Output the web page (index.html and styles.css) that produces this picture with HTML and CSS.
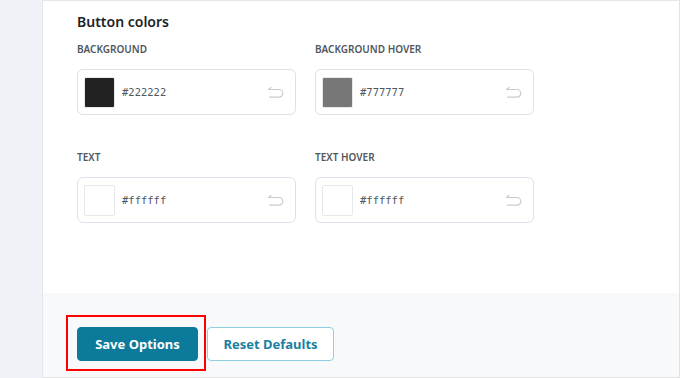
FILE: index.html
```html
<!DOCTYPE html>
<html lang="en">
<head>
    <meta charset="UTF-8">
    <meta name="viewport" content="width=device-width, initial-scale=1.0">
    <title>Button colors</title>
    <link rel="stylesheet" href="styles.css">
</head>
<body>
    <div class="sidebar"></div>
    <div class="main">
        <div class="content">
            <h3>Button colors</h3>
            <div class="color-grid">
                <div class="field">
                    <label>Background</label>
                    <div class="picker">
                        <span class="swatch" style="background: #222222;"></span>
                        <span class="value">#222222</span>
                        <svg class="undo" width="18" height="12" viewBox="0 0 18 12"><path d="M5 1.5 L2.5 3.5 M2.5 3.5 H13 a3.8 3.8 0 0 1 0 7.6 H3.5" fill="none" stroke="#c8cbd0" stroke-width="1.2" stroke-linecap="round"/></svg>
                    </div>
                </div>
                <div class="field">
                    <label>Background Hover</label>
                    <div class="picker">
                        <span class="swatch" style="background: #777777;"></span>
                        <span class="value">#777777</span>
                        <svg class="undo" width="18" height="12" viewBox="0 0 18 12"><path d="M5 1.5 L2.5 3.5 M2.5 3.5 H13 a3.8 3.8 0 0 1 0 7.6 H3.5" fill="none" stroke="#c8cbd0" stroke-width="1.2" stroke-linecap="round"/></svg>
                    </div>
                </div>
                <div class="field">
                    <label>Text</label>
                    <div class="picker">
                        <span class="swatch" style="background: #ffffff;"></span>
                        <span class="value">#ffffff</span>
                        <svg class="undo" width="18" height="12" viewBox="0 0 18 12"><path d="M5 1.5 L2.5 3.5 M2.5 3.5 H13 a3.8 3.8 0 0 1 0 7.6 H3.5" fill="none" stroke="#c8cbd0" stroke-width="1.2" stroke-linecap="round"/></svg>
                    </div>
                </div>
                <div class="field">
                    <label>Text Hover</label>
                    <div class="picker">
                        <span class="swatch" style="background: #ffffff;"></span>
                        <span class="value">#ffffff</span>
                        <svg class="undo" width="18" height="12" viewBox="0 0 18 12"><path d="M5 1.5 L2.5 3.5 M2.5 3.5 H13 a3.8 3.8 0 0 1 0 7.6 H3.5" fill="none" stroke="#c8cbd0" stroke-width="1.2" stroke-linecap="round"/></svg>
                    </div>
                </div>
            </div>
        </div>
        <div class="footer">
            <div class="highlight">
                <button class="btn btn-primary">Save Options</button>
            </div>
            <button class="btn btn-secondary">Reset Defaults</button>
        </div>
    </div>
</body>
</html>
```

FILE: styles.css
```css
body {
    margin: 0;
    display: flex;
    height: 378px;
    font-family: "Noto Sans", "Open Sans", sans-serif;
    color: #1d2327;
    background: #fff;
    overflow: hidden;
}
.sidebar {
    width: 42px;
    background-color: #f0f2f7;
    border-right: 1px solid #e3e6ec;
}
.main {
    flex: 1;
    display: flex;
    flex-direction: column;
    border-top: 1px solid #e6e6e6;
    border-right: 1px solid #e2e2e2;
    border-bottom: 1px solid #e2e2e2;
}
.content {
    flex: 1;
    padding: 11px 34px 0 34px;
}
h3 {
    margin: 0;
    font-size: 14px;
    font-weight: 600;
    line-height: 20px;
    color: #1d2327;
}
.color-grid {
    display: grid;
    grid-template-columns: 219px 219px;
    column-gap: 19px;
    row-gap: 35px;
    margin-top: 10px;
}
.field label {
    display: block;
    font-size: 10px;
    font-weight: 600;
    text-transform: uppercase;
    color: #50575e;
    line-height: 14px;
    margin-bottom: 13px;
}
.picker {
    display: flex;
    align-items: center;
    border: 1px solid #dde1ea;
    border-radius: 6px;
    padding: 0 11px 0 6px;
    box-sizing: border-box;
    height: 46px;
}
.field:first-child .picker,
.field:nth-child(2) .picker {
    margin-top: 1px;
}
.swatch {
    width: 31px;
    height: 31px;
    border: 1px solid #e6e8ec;
    border-radius: 2px;
    box-sizing: border-box;
}
.value {
    flex: 1;
    margin-left: 7px;
    font-family: "DejaVu Sans Mono", monospace;
    font-size: 10.5px;
    color: #50575e;
}
.undo {
    display: block;
}
.footer {
    height: 84px;
    background-color: #f8f9fb;
    display: flex;
    align-items: flex-start;
    padding: 22px 0 0 23px;
    box-sizing: border-box;
}
.highlight {
    border: 2px solid #ff0000;
    padding: 10px 6px 8px 9px;
    display: flex;
}
.btn {
    height: 34px;
    font-family: "Noto Sans", "Open Sans", sans-serif;
    font-size: 13px;
    font-weight: 700;
    border-radius: 4px;
    cursor: pointer;
    padding: 0;
}
.btn-primary {
    width: 121px;
    background-color: #0b7a9b;
    color: #fff;
    border: 1px solid #0b7a9b;
}
.btn-secondary {
    width: 127px;
    margin-top: 12px;
    margin-left: 1px;
    background-color: #fff;
    color: #1a7fa1;
    border: 1px solid #8ed0e2;
}
```
